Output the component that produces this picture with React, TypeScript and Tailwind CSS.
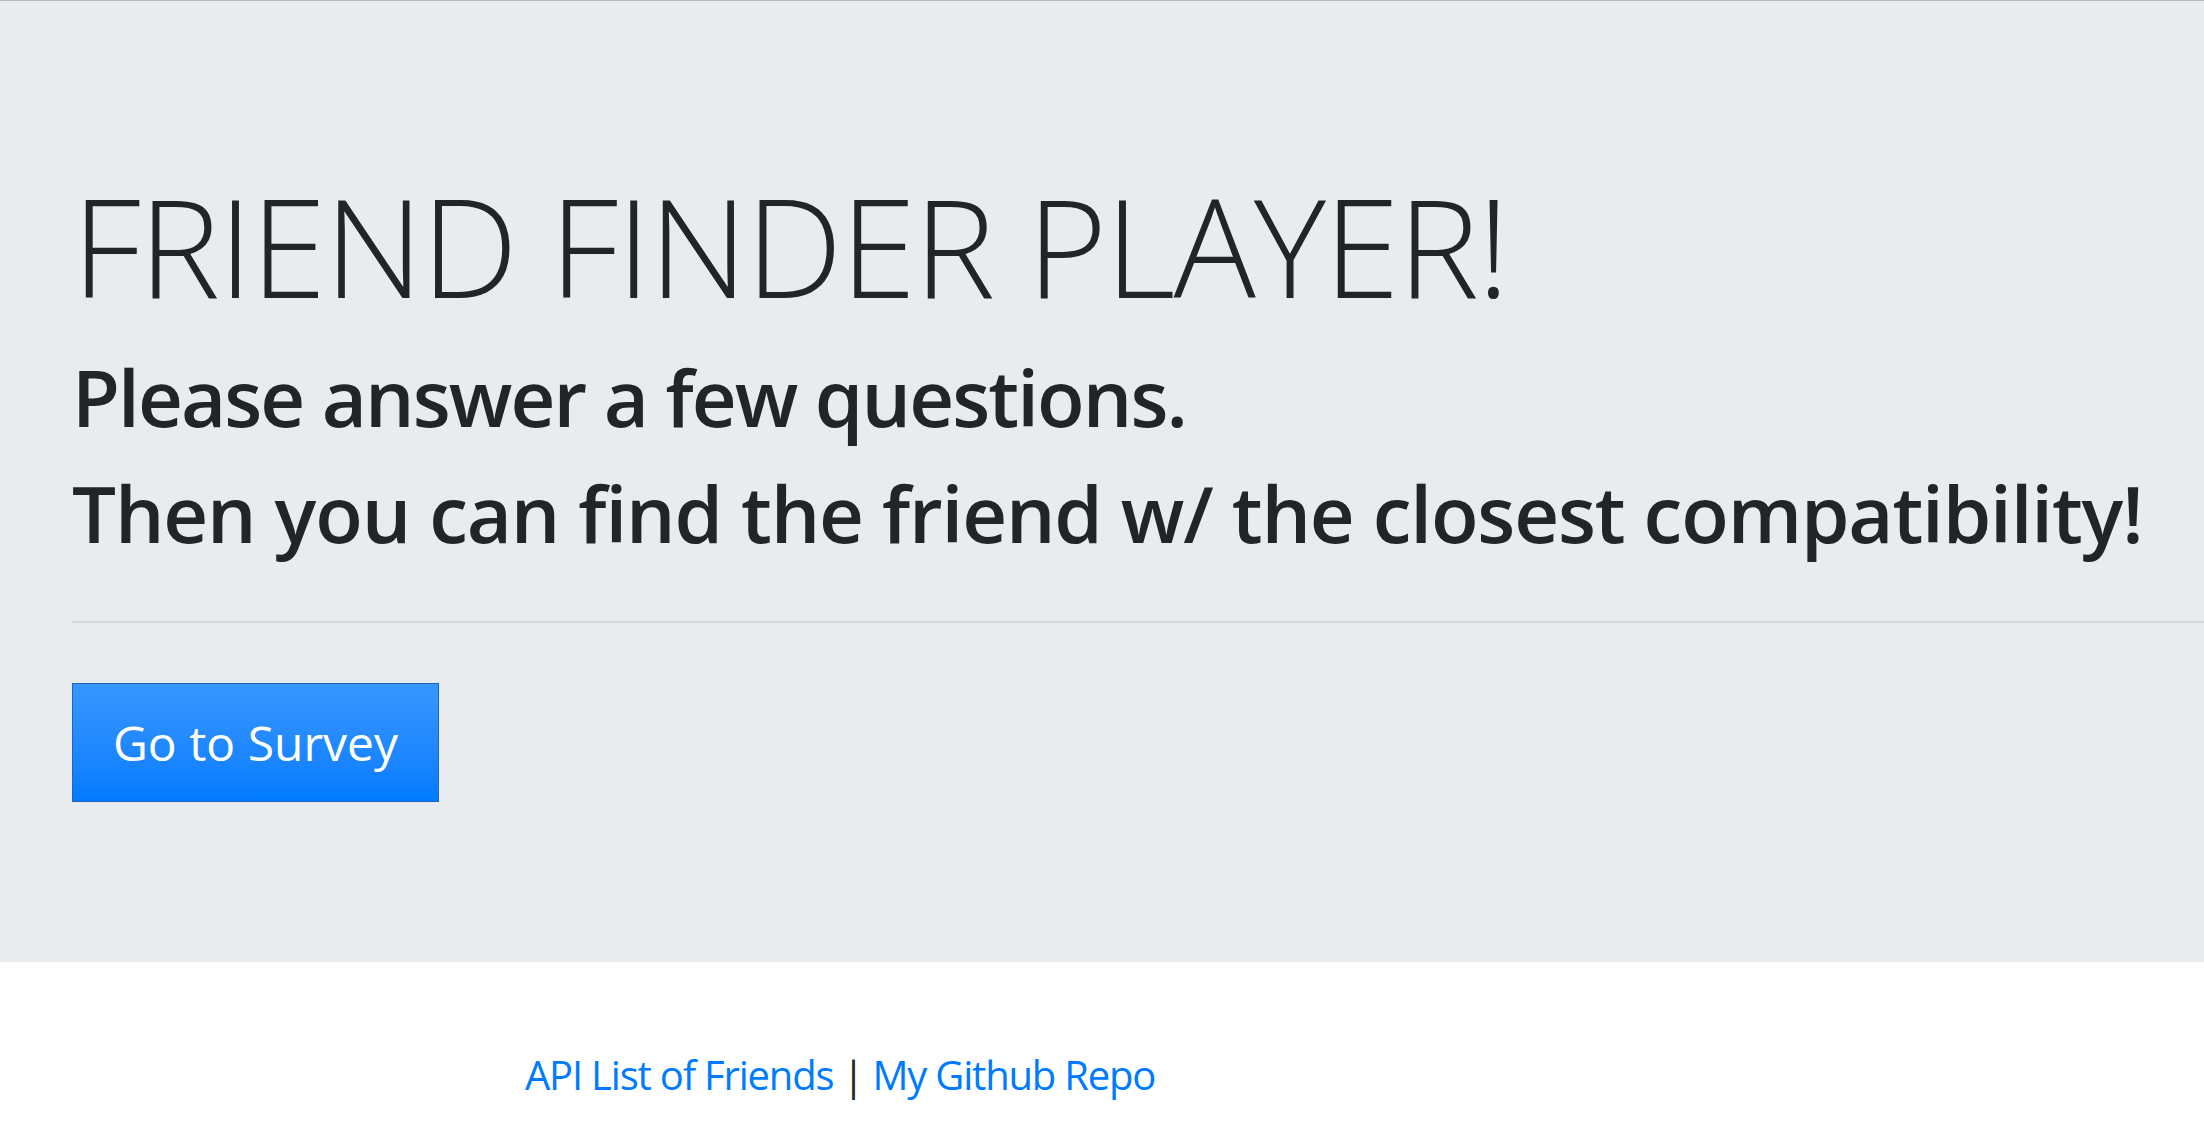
import React from "react";

const App: React.FC = () => {
  return (
    <div
      className="min-h-screen bg-white border-t border-[#b4bcc4] text-[#212529]"
      style={{ fontFamily: '"Open Sans", "Noto Sans", sans-serif' }}
    >
      {/* Jumbotron */}
      <div className="bg-[#e9ecef] pt-[160px] pb-[160px] pl-[72px] mb-[83px]">
        <h1 className="text-[137px] leading-[168px] font-light tracking-[-2px] mb-[20px] whitespace-nowrap">
          FRIEND FINDER PLAYER!
        </h1>
        <h2 className="text-[78px] leading-[96px] font-semibold tracking-[-1.9px] mb-[20px] whitespace-nowrap">
          Please answer a few questions.
        </h2>
        <h2 className="text-[78px] leading-[96px] font-semibold tracking-[-1.15px] whitespace-nowrap">
          Then you can find the friend w/ the closest compatibility!
        </h2>
        <hr className="mt-[60px] mb-[60px] border-0 border-t-[2.5px] border-t-[#d3d7db]" />
        <button className="w-[367px] h-[119px] border border-[#1f63c4] bg-gradient-to-b from-[#3797ff] to-[#007bff] text-white text-[48px] leading-[75px]">
          Go to Survey
        </button>
      </div>

      {/* Footer links */}
      <footer className="pl-[525px] text-[40px] leading-[60px] tracking-[-1.2px]">
        <a href="#" className="text-[#007bff]">API List of Friends</a>
        <span> | </span>
        <a href="#" className="text-[#007bff]">My Github Repo</a>
      </footer>
    </div>
  );
};

export default App;
